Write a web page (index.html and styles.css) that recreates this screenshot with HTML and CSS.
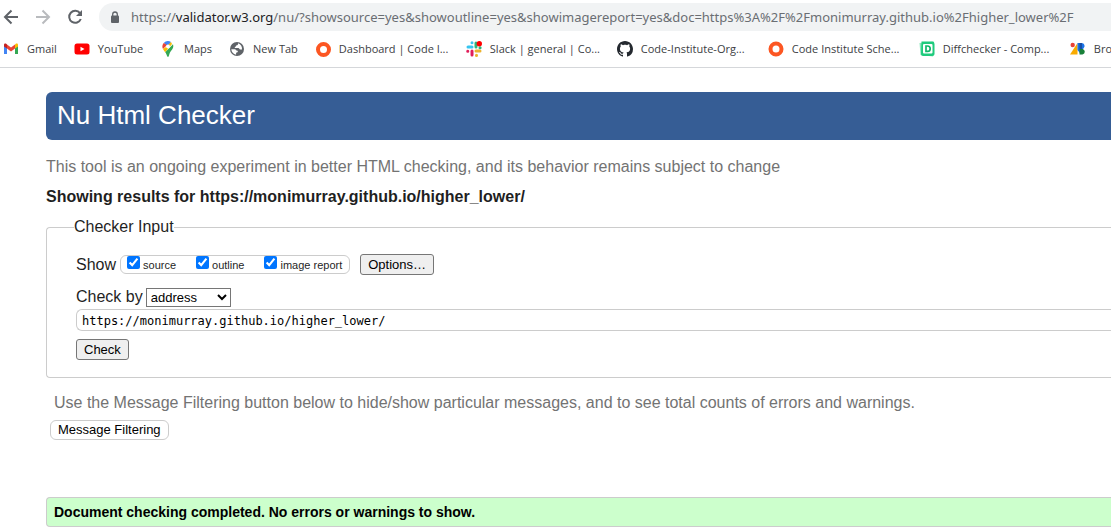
FILE: index.html
```html
<!DOCTYPE html>
<html lang="en">
<head>
<meta charset="utf-8">
<title>Nu Html Checker</title>
<link rel="stylesheet" href="styles.css">
</head>
<body>
<header class="browser">
  <div class="toolbar">
    <button class="nav" aria-label="Back"><svg width="16" height="16" viewBox="0 0 16 16" fill="none" stroke="#5f6368" stroke-width="2"><path d="M15 8H2M8.500 1.500 2 8l6.500 6.500"/></svg></button>
    <button class="nav" aria-label="Forward"><svg width="16" height="16" viewBox="0 0 16 16" fill="none" stroke="#b9bbbe" stroke-width="2"><path d="M1 8h13M7.500 1.500 14 8l-6.500 6.500"/></svg></button>
    <button class="nav" aria-label="Reload"><svg width="16" height="16" viewBox="0 0 16 16"><path d="M13 4.200A6 6 0 1 0 13.800 10" fill="none" stroke="#5f6368" stroke-width="2"/><path d="M15 1v6H9z" fill="#5f6368"/></svg></button>
    <div class="address">
      <svg width="10" height="13" viewBox="0 0 10 13"><rect x="1" y="4.500" width="8" height="7.500" rx="1" fill="#5f6368"/><path d="M2.700 5V3.300a2.300 2.300 0 0 1 4.600 0V5" fill="none" stroke="#5f6368" stroke-width="1.300"/></svg>
      <span class="url">https://<span class="host">validator.w3.org</span>/nu/?showsource=yes&amp;showoutline=yes&amp;showimagereport=yes&amp;doc=https%3A%2F%2Fmonimurray.github.io%2Fhigher_lower%2F</span>
    </div>
  </div>
  <nav class="bookmarks" aria-label="Bookmarks">
    <a href="#" class="bookmark"><svg width="16" height="16" viewBox="0 0 16 16"><path d="M1 4v9h3V7z" fill="#4285f4"/><path d="M15 4v9h-3V7z" fill="#34a853"/><path d="M1 4.500V4c0-1.500 1.500-1.800 2.500-1L4 3.400V7.500L1 5.500z" fill="#c5221f"/><path d="M4 3.400 8 6.500l4-3.100v4.100l-4 3-4-3z" fill="#ea4335"/><path d="m12 3.400.5-.4c1-.8 2.500-.5 2.500 1v1.500l-3 2z" fill="#fbbc04"/></svg><span>Gmail</span></a>
    <a href="#" class="bookmark"><svg width="16" height="16" viewBox="0 0 16 16"><rect x="0.500" y="2.500" width="15" height="11" rx="2.500" fill="#f00"/><path d="m6.500 5.700 4 2.300-4 2.300z" fill="#fff"/></svg><span>YouTube</span></a>
    <a href="#" class="bookmark"><svg width="16" height="16" viewBox="0 0 16 16"><path d="M8 0a5.500 5.500 0 0 0-4.300 2L8 5.500 11 1A5.500 5.500 0 0 0 8 0" fill="#4285f4"/><path d="M3.700 2A5.500 5.500 0 0 0 3 8l4-4z" fill="#ea4335"/><path d="M3 8c.6 1.200 1.400 2.200 2.200 3.300L12 3 11 1 6 6z" fill="#fbbc04"/><path d="M13 3.200c1.300 4-1.800 6-3 8.300C9 13.500 9 16 8 16s-1-2.500-2.800-4.700z" fill="#34a853"/><circle cx="8" cy="5.500" r="1.900" fill="#fff"/></svg><span>Maps</span></a>
    <a href="#" class="bookmark"><svg width="16" height="16" viewBox="0 0 16 16"><circle cx="8" cy="8" r="7" fill="#5f6368"/><path d="M9 2.300c.3 1.500-.4 2-1.700 2.200-.6.200-.2 1.300-1.300 1.600-.7.200-.2 1 .2 1h3.200c1 0 .8 1.300 1.600 1.300H13C13.300 6 12 3.200 9 2.300M2.300 8.200c.2 2.800 2 5 4.800 5.500v-1.400c0-.8.600-.8 1.300-1 .8-.3.500-1.600-.5-1.700-.8-.1-1-.3-1.500-1.400z" fill="#fff"/></svg><span>New Tab</span></a>
    <a href="#" class="bookmark long"><svg width="16" height="16" viewBox="0 0 16 16"><circle cx="8.500" cy="8.500" r="5.500" fill="none" stroke="#fc5622" stroke-width="4"/></svg><span>Dashboard | Code I...</span></a>
    <a href="#" class="bookmark long"><svg width="16" height="16" viewBox="0 0 16 16" stroke-width="3" stroke-linecap="round"><path d="M2 6h4M6 1.700v.1" stroke="#36c5f0"/><path d="M10 2v4" stroke="#2eb67d"/><path d="M10 10h4M10.500 14.300v.1" stroke="#ecb22e"/><path d="M6 10v4M1.700 10.200h.1" stroke="#e01e5a"/><path d="M14 6.800h.1" stroke="#2eb67d"/><circle cx="13.300" cy="2.700" r="2.700" fill="#f00" stroke="none"/></svg><span>Slack | general | Co...</span></a>
    <a href="#" class="bookmark long"><svg width="16" height="16" viewBox="0 0 16 16"><path fill="#24292f" d="M8 0C3.580 0 0 3.580 0 8c0 3.540 2.290 6.530 5.470 7.590.4.070.55-.17.55-.38 0-.19-.01-.82-.01-1.490-2.010.37-2.530-.49-2.690-.94-.09-.23-.48-.94-.82-1.130-.28-.15-.68-.52-.01-.53.63-.01 1.080.58 1.230.82.72 1.210 1.870.87 2.330.66.070-.52.28-.87.510-1.070-1.780-.2-3.640-.89-3.640-3.950 0-.87.31-1.590.82-2.150-.08-.2-.36-1.020.08-2.120 0 0 .67-.21 2.200.82.64-.18 1.320-.27 2-.27s1.360.09 2 .27c1.530-1.040 2.200-.82 2.200-.82.44 1.100.16 1.920.08 2.120.51.56.82 1.270.82 2.150 0 3.070-1.870 3.750-3.650 3.950.29.25.54.73.54 1.480 0 1.070-.01 1.930-.01 2.200 0 .21.15.46.55.38A8.010 8.010 0 0 0 16 8c0-4.420-3.580-8-8-8"/></svg><span>Code-Institute-Org...</span></a>
    <a href="#" class="bookmark long"><svg width="16" height="16" viewBox="0 0 16 16"><circle cx="8" cy="8" r="5.500" fill="none" stroke="#fc5622" stroke-width="4"/></svg><span>Code Institute Sche...</span></a>
    <a href="#" class="bookmark long"><svg width="16" height="16" viewBox="0 0 16 16"><path d="M.5 2 15 .5 14 15.500 1.500 14z" fill="#8be8bc"/><path d="M2.500.5h11Q15.500.5 15.500 3v9.500Q15.500 15 13 15H4Q2 15 2 13z" fill="#1fcb7d"/><rect x="4" y="3" width="9.500" height="9.500" rx="1" fill="#fff"/><path d="M7 5h1.500a2.700 2.700 0 0 1 0 5.400H7z" fill="none" stroke="#12b76a" stroke-width="1.700"/></svg><span>Diffchecker - Comp...</span></a>
    <a href="#" class="bookmark"><svg width="16" height="16" viewBox="0 0 16 16"><circle cx="2.700" cy="4" r="2.200" fill="#ea4335"/><path d="M7.500 2v11.500H0z" fill="#f9ab00"/><path d="M7.500 2h4.200a3 3 0 0 1 1.800 5.300L11 13.500 7.500 9z" fill="#1a73e8"/><path d="M9.500 8h3a2.800 2.800 0 0 1 0 5.500h-3z" fill="#188038"/><path d="M9.500 8V2H12v6z" fill="#174ea6"/></svg><span>Bro</span></a>
  </nav>
</header>
<main class="page">
  <h1 class="banner">Nu Html Checker</h1>
  <p class="intro">This tool is an ongoing experiment in better HTML checking, and its behavior remains subject to change</p>
  <h2 class="results-title">Showing results for https://monimurray.github.io/higher_lower/</h2>
  <form>
    <fieldset class="checker">
      <legend>Checker Input</legend>
      <div class="row show-row">
        <span>Show</span>
        <span class="show-options">
          <label><input type="checkbox" checked>source</label>
          <label><input type="checkbox" checked>outline</label>
          <label><input type="checkbox" checked>image report</label>
        </span>
        <button type="button" class="button">Options…</button>
      </div>
      <div class="row">
        <label for="method">Check by</label>
        <select id="method" class="method"><option>address</option></select>
      </div>
      <input class="doc" type="text" aria-label="Address" value="https://monimurray.github.io/higher_lower/">
      <button type="button" class="button">Check</button>
    </fieldset>
  </form>
  <p class="hint">Use the Message Filtering button below to hide/show particular messages, and to see total counts of errors and warnings.</p>
  <button type="button" class="filter">Message Filtering</button>
  <p class="success">Document checking completed. No errors or warnings to show.</p>
</main>
</body>
</html>
```

FILE: styles.css
```css
* { box-sizing: border-box; }
body {
  margin: 0;
  background: #fff;
  color: #1f1f1f;
  font: 16px/20px "Liberation Sans", Arial, sans-serif;
  overflow-x: hidden;
}

/* Browser chrome */
.browser {
  border-bottom: 1px solid #d5d7da;
  font-family: "Noto Sans", "Open Sans", sans-serif;
}
.toolbar {
  display: flex;
  align-items: center;
  gap: 16px;
  height: 34px;
  padding-left: 3px;
}
.nav {
  flex: none;
  width: 16px;
  height: 16px;
  padding: 0;
  border: 0;
  background: none;
}
.nav svg, .bookmark svg, .address svg { display: block; flex: none; }
.address {
  flex: 1;
  display: flex;
  align-items: center;
  gap: 11px;
  min-width: 0;
  height: 28px;
  padding-left: 11px;
  border-radius: 14px 0 0 14px;
  background: #f1f3f4;
  white-space: nowrap;
  font-size: 13px;
  color: #6a6e73;
}
.host { color: #202124; }
.bookmarks {
  display: flex;
  align-items: center;
  gap: 17px;
  height: 33px;
  padding: 0 0 4px 3px;
  overflow: hidden;
}
.bookmark {
  flex: none;
  display: flex;
  align-items: center;
  gap: 8px;
  color: #3c4043;
  font-family: "Open Sans", sans-serif;
  font-size: 11px;
  line-height: 16px;
  white-space: nowrap;
  text-decoration: none;
}
.long { width: 134px; }

/* Checker page */
.page { padding: 24px 0 0 46px; }
.banner {
  margin: 0;
  padding: 8px 11px 10px;
  border-radius: 6px 0 0 6px;
  background: #365d95;
  color: #fff;
  font-size: 26px;
  font-weight: 400;
  line-height: 30px;
}
.intro { margin: 17px 0 0; color: #737373; }
.results-title { margin: 10px 0 0; font-size: 16px; line-height: 20px; }
.checker {
  margin: 10px 0 0;
  padding: 17px 0 17px 29px;
  border: 1px solid #ccc;
  border-right: 0;
  border-radius: 4px 0 0 4px;
}
.checker legend { margin-left: -2px; padding: 0; }
.row { display: flex; align-items: center; gap: 3px; }
.show-row { gap: 4px; margin-bottom: 12px; }
.show-options {
  display: flex;
  gap: 20px;
  height: 19px;
  margin-right: 6px;
  padding: 0 7px 0 6px;
  border: 1px solid #ccc;
  border-radius: 6px;
  font-size: 11px;
  line-height: 19px;
}
.show-options label { display: flex; gap: 3px; }
.show-options input { width: 13px; height: 13px; margin: 0; accent-color: #0075ff; }
.button {
  display: block;
  height: 21px;
  padding: 0 7px;
  border: 1px solid #767676;
  border-radius: 3px;
  background: #efefef;
  color: #000;
  font: 13px/19px "Liberation Sans", Arial, sans-serif;
}
.method {
  width: 85px;
  height: 19px;
  border: 1px solid #767676;
  background: #fff;
  color: #000;
  font: 13px "Liberation Sans", Arial, sans-serif;
}
.doc {
  display: block;
  width: 100%;
  height: 22px;
  margin: 2px 0 8px;
  padding: 1px 5px 0;
  border: 1px solid #ccc;
  border-right: 0;
  border-radius: 6px 0 0 6px;
  color: #000;
  font: 12px "DejaVu Sans Mono", monospace;
}
.hint { margin: 15px 0 7px 8px; color: #737373; }
.filter {
  display: block;
  height: 20px;
  margin-left: 4px;
  padding: 0 7px;
  border: 1px solid #ccc;
  border-radius: 6px;
  background: #fff;
  color: #000;
  font: 13px/18px "Liberation Sans", Arial, sans-serif;
}
.success {
  margin: 57px 0 0;
  padding: 4px 7px;
  border: 1px solid #ccc;
  border-right: 0;
  border-radius: 4px 0 0 4px;
  background: #cfc;
  color: #000;
  font-size: 14px;
  font-weight: 700;
}
```
